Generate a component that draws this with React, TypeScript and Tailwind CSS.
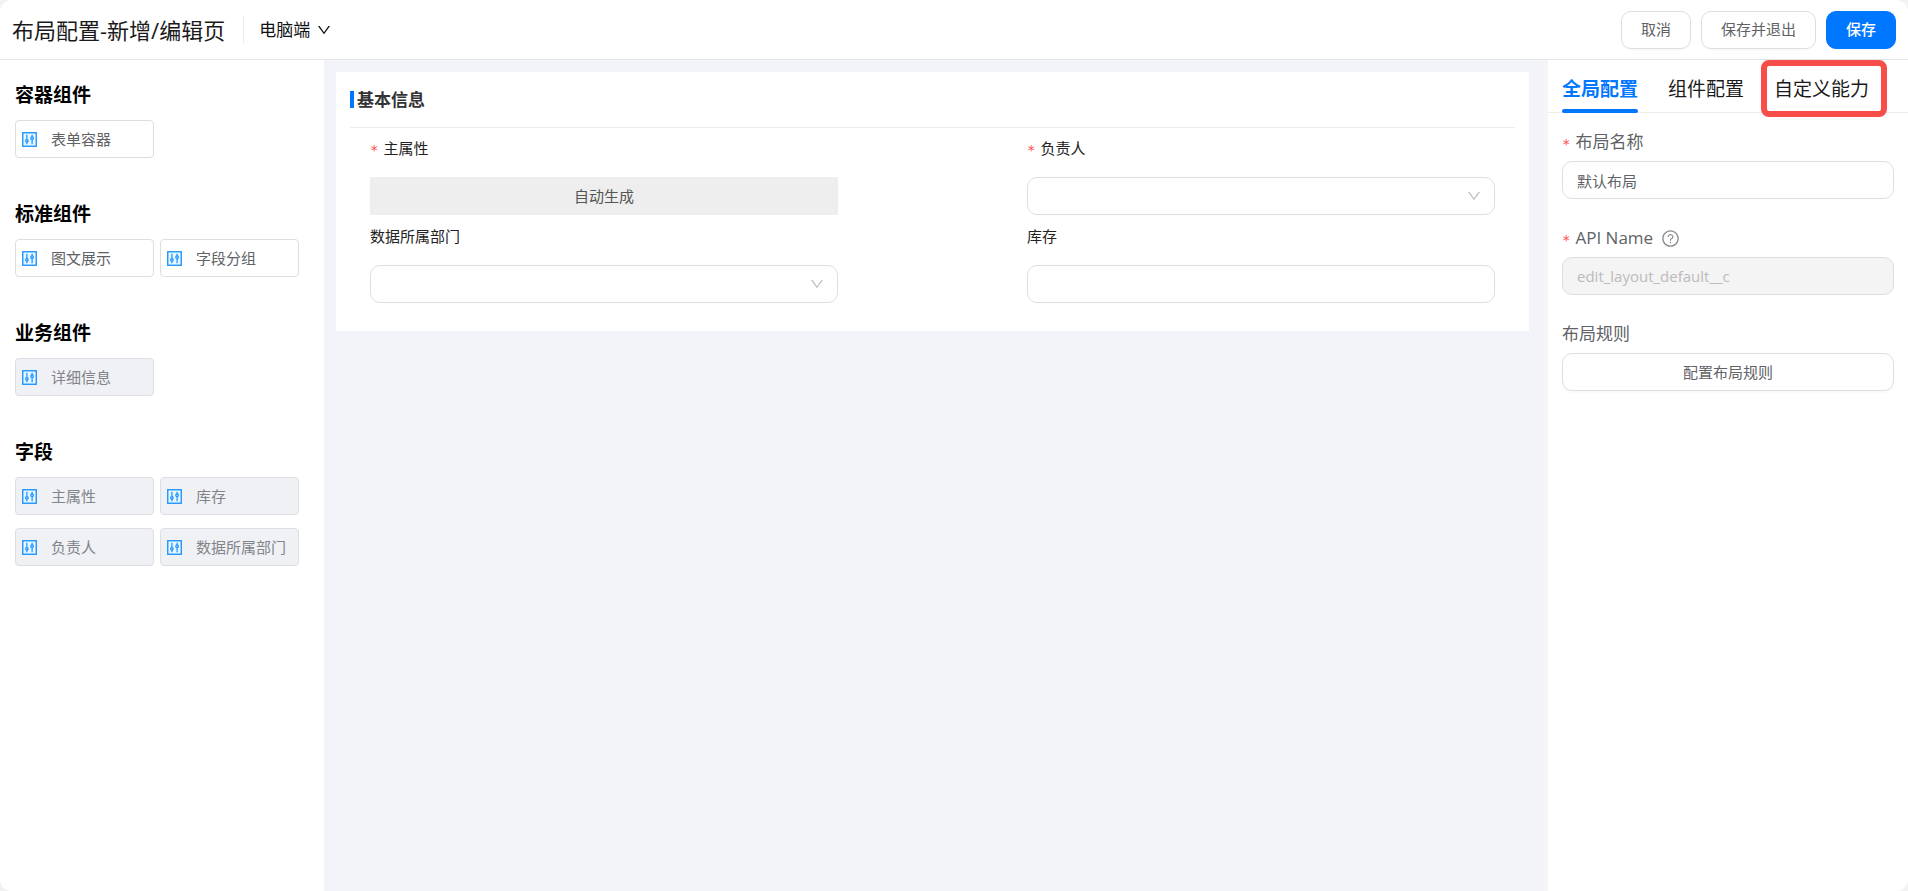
import { useState, type ReactNode } from 'react'
import { AiOutlineDown, AiOutlineQuestionCircle } from 'react-icons/ai'

interface PaletteItem {
  label: string
  /** already placed on the canvas, can't be dragged in again */
  used?: boolean
}

interface PaletteGroup {
  title: string
  items: PaletteItem[]
}

const PALETTE: PaletteGroup[] = [
  { title: '容器组件', items: [{ label: '表单容器' }] },
  { title: '标准组件', items: [{ label: '图文展示' }, { label: '字段分组' }] },
  { title: '业务组件', items: [{ label: '详细信息', used: true }] },
  {
    title: '字段',
    items: [
      { label: '主属性', used: true },
      { label: '库存', used: true },
      { label: '负责人', used: true },
      { label: '数据所属部门', used: true },
    ],
  },
]

const TABS = ['全局配置', '组件配置', '自定义能力']

const CONTROL = 'h-[38px] w-full rounded-[10px] border border-[#dcdee3] bg-white outline-none'
const BUTTON = 'h-[38px] rounded-[10px] border px-[19px] shadow-[0_2px_0_rgba(0,0,0,0.02)]'

export default function App() {
  return (
    <div className="min-h-screen bg-[#f2f2f2] font-['Open_Sans','Noto_Sans_CJK_SC',sans-serif] text-[15px]">
      <div className="flex min-h-screen flex-col overflow-hidden rounded-xl bg-white">
        <Header />
        <div className="flex flex-1">
          <Palette />
          <Canvas />
          <ConfigPanel />
        </div>
      </div>
    </div>
  )
}

function Header() {
  return (
    <header className="flex h-[60px] items-center border-b border-[#e3e4e8] px-3">
      <h1 className="text-[22px] leading-8 text-[#1a1a1a]">布局配置-新增/编辑页</h1>
      <div className="ml-[18px] h-7 w-px bg-[#ebebeb]" />
      <button type="button" className="ml-[15px] flex items-center gap-[6px] text-[17px] leading-6 text-[#111]">
        电脑端
        <AiOutlineDown size={16} />
      </button>
      <div className="ml-auto flex gap-[10px]">
        <button type="button" className={`${BUTTON} border-[#dcdee3] text-[#606266]`}>
          取消
        </button>
        <button type="button" className={`${BUTTON} border-[#dcdee3] text-[#606266]`}>
          保存并退出
        </button>
        <button type="button" className={`${BUTTON} border-[#0077ff] bg-[#0077ff] font-medium text-white`}>
          保存
        </button>
      </div>
    </header>
  )
}

function Palette() {
  return (
    <aside className="flex w-[324px] shrink-0 flex-col gap-11 px-[15px] pt-[23px]">
      {PALETTE.map((group) => (
        <section key={group.title}>
          <h2 className="mb-[13px] text-[19px] leading-6 font-bold text-black">{group.title}</h2>
          <div className="grid grid-cols-[139px_139px] gap-x-[6px] gap-y-[13px]">
            {group.items.map((item) => (
              <button
                key={item.label}
                type="button"
                disabled={item.used}
                className={`flex h-[38px] items-center rounded border border-[#dcdee3] pl-1 whitespace-nowrap ${
                  item.used ? 'bg-[#f0f1f5] text-[#82848a]' : 'bg-white text-[#606266]'
                }`}
              >
                <ControlIcon />
                <span className="ml-3">{item.label}</span>
              </button>
            ))}
          </div>
        </section>
      ))}
    </aside>
  )
}

function Canvas() {
  return (
    <main className="min-w-0 flex-1 border-r-[6px] border-[#f5f5f5] bg-[#f3f4f9] pt-3 pr-[13px] pl-3">
      <div className="bg-white px-[14px] pb-7">
        <div className="flex h-14 items-center border-b border-[#ededed]">
          <span className="h-[17px] w-1 bg-[#0077ff]" />
          <h3 className="ml-[3px] text-[17px] leading-6 font-semibold text-[#333]">基本信息</h3>
        </div>
        <div className="grid grid-cols-2 gap-x-[189px] gap-y-px px-5">
          <Field id="main-attr" label="主属性" required>
            <output id="main-attr" className="flex h-[38px] items-center justify-center bg-[#eee] text-[#555]">
              自动生成
            </output>
          </Field>
          <Field id="owner" label="负责人" required>
            <Select id="owner" />
          </Field>
          <Field id="dept" label="数据所属部门">
            <Select id="dept" />
          </Field>
          <Field id="stock" label="库存">
            <input id="stock" type="text" className={`${CONTROL} px-[14px]`} />
          </Field>
        </div>
      </div>
    </main>
  )
}

interface FieldProps {
  id: string
  label: string
  required?: boolean
  children: ReactNode
}

function Field({ id, label, required, children }: FieldProps) {
  return (
    <div>
      <label htmlFor={id} className="flex h-[49px] items-start pt-2 leading-6 text-[#222]">
        {required && <RequiredMark />}
        {label}
      </label>
      {children}
    </div>
  )
}

function RequiredMark() {
  return (
    <span className="mr-[5px] pt-1 font-['DejaVu_Sans_Mono',monospace] text-sm leading-5 text-[#ff4d4f]">*</span>
  )
}

function Select({ id }: { id: string }) {
  return (
    <div className="relative">
      <select id={id} className={`${CONTROL} appearance-none px-[14px]`} />
      <AiOutlineDown size={16} className="pointer-events-none absolute top-[11px] right-[13px] text-[#bfbfbf]" />
    </div>
  )
}

function ConfigPanel() {
  const [active, setActive] = useState(TABS[0])
  const [name, setName] = useState('默认布局')

  return (
    <aside className="w-[360px] shrink-0">
      <div role="tablist" className="flex h-[53px] gap-[30px] border-b border-[#ededed] pl-[14px] text-[19px]">
        {TABS.map((tab) => (
          <button
            key={tab}
            type="button"
            role="tab"
            aria-selected={tab === active}
            onClick={() => setActive(tab)}
            className={`relative h-[53px] pt-[5px] whitespace-nowrap ${
              tab === active ? 'font-semibold text-[#0077ff]' : 'text-[#1a1a1a]'
            }`}
          >
            {tab}
            {tab === active && <span className="absolute inset-x-0 bottom-0 h-1 rounded-sm bg-[#0077ff]" />}
            {tab === '自定义能力' && (
              <span className="absolute top-0 -right-[18px] -left-[13px] h-[57px] rounded-lg border-[6px] border-[#f94d4a]" />
            )}
          </button>
        ))}
      </div>

      <div className="flex flex-col gap-[27px] px-[14px] pt-[17px]">
        <div>
          <label htmlFor="layout-name" className="mb-[7px] flex items-center text-[17px] leading-6 text-[#606266]">
            <RequiredMark />
            布局名称
          </label>
          <input
            id="layout-name"
            type="text"
            value={name}
            onChange={(e) => setName(e.target.value)}
            className={`${CONTROL} px-[14px] text-[#606266]`}
          />
        </div>
        <div>
          <label htmlFor="api-name" className="mb-[7px] flex items-center text-[17px] leading-6 text-[#606266]">
            <RequiredMark />
            API Name
            <AiOutlineQuestionCircle size={19} className="ml-2 text-[#8c8c8c]" />
          </label>
          <input
            id="api-name"
            type="text"
            disabled
            value="edit_layout_default__c"
            className="h-[38px] w-full rounded-[10px] border border-[#dcdee3] bg-[#f4f4f4] px-[14px] text-[#bbb]"
          />
        </div>
        <div>
          <div className="mb-[7px] text-[17px] leading-6 text-[#606266]">布局规则</div>
          <button type="button" className={`${CONTROL} text-[#606266] shadow-[0_2px_0_rgba(0,0,0,0.02)]`}>
            配置布局规则
          </button>
        </div>
      </div>
    </aside>
  )
}

function ControlIcon() {
  return (
    <svg viewBox="0 0 1024 1024" className="size-[19px] shrink-0" aria-hidden="true">
      <rect x="148" y="148" width="728" height="728" fill="#e6f7ff" stroke="#1890ff" strokeWidth="72" />
      <path d="M372 256v512M652 256v512" stroke="#1890ff" strokeWidth="64" />
      <circle cx="372" cy="586" r="69" fill="#e6f7ff" stroke="#1890ff" strokeWidth="66" />
      <circle cx="652" cy="440" r="69" fill="#e6f7ff" stroke="#1890ff" strokeWidth="66" />
    </svg>
  )
}
